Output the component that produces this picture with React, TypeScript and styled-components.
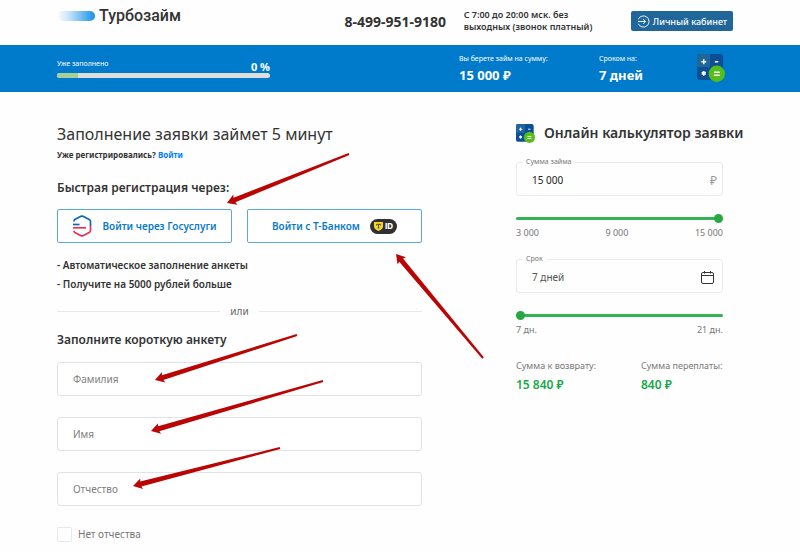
import React, { useState } from "react";
import styled, { createGlobalStyle } from "styled-components";

const GlobalStyle = createGlobalStyle`
  *, *::before, *::after { box-sizing: border-box; }
  body {
    margin: 0;
    background: #fefefe;
    color: #333;
    font-family: "Noto Sans", "Open Sans", sans-serif;
    font-size: 10px;
  }
  button, input { font-family: inherit; }
`;

const Page = styled.div`
  position: relative;
`;

const Header = styled.header`
  display: grid;
  grid-template-columns: 287fr 119fr 167fr auto;
  padding: 0 67px 0 57px;
  height: 45px;
`;

const Logo = styled.a`
  display: flex;
  gap: 4px;
  padding-top: 4px;
  align-self: start;
  align-items: center;
  color: #333;
  font-family: Roboto, sans-serif;
  font-size: 16px;
  font-weight: 500;
  line-height: 24px;
  text-decoration: none;
`;

const LogoMark = styled.span`
  width: 38px;
  height: 10px;
  border-radius: 5px;
  background: linear-gradient(90deg, #fefefe, #bfe0fa 35%, #1490ea);
`;

const Phone = styled.a`
  padding-top: 12px;
  color: #333;
  font-size: 14px;
  font-weight: 700;
  line-height: 20px;
  text-decoration: none;
  white-space: nowrap;
`;

const Schedule = styled.p`
  margin: 0;
  padding-top: 9px;
  font-size: 9px;
  font-weight: 600;
  line-height: 12px;
  white-space: nowrap;
`;

const AccountButton = styled.button`
  display: flex;
  align-items: center;
  justify-content: center;
  gap: 3px;
  width: 102px;
  height: 20px;
  margin-top: 11px;
  padding: 0;
  border: 0;
  border-radius: 2px;
  background: #216698;
  color: #fff;
  font-size: 9px;
  font-weight: 500;
  white-space: nowrap;
`;

const Summary = styled.section`
  display: grid;
  grid-template-columns: 402fr 140fr 98fr auto;
  padding: 0 75px 0 57px;
  height: 47px;
  background: #007acb;
  color: #fff;
`;

const Progress = styled.div`
  width: 53%;
  padding-top: 12px;
`;

const ProgressText = styled.div`
  display: flex;
  justify-content: space-between;
  height: 16px;
  font-size: 7px;
  line-height: 14px;
`;

const Percent = styled.strong`
  font-size: 11px;
  line-height: 19px;
`;

const ProgressTrack = styled.div`
  height: 5px;
  border-radius: 3px;
  background: #dedede;
  overflow: hidden;
`;

const ProgressFill = styled.div`
  width: 10%;
  height: 100%;
  background: #a8cf96;
`;

const Fact = styled.div`
  padding-top: 7px;
  font-size: 7px;
  line-height: 13px;
  white-space: nowrap;
`;

const FactValue = styled.strong`
  display: block;
  font-size: 13px;
  line-height: 20px;
`;

const SummaryIcon = styled.div`
  padding-top: 9px;
`;

const Main = styled.main`
  display: grid;
  grid-template-columns: 365fr 229fr;
  gap: 94px;
  padding: 30px 55px 0 57px;
`;

const Title = styled.h1`
  margin: 0;
  font-size: 16px;
  font-weight: 400;
  line-height: 24px;
  white-space: nowrap;
`;

const Registered = styled.p`
  margin: 2px 0 17px;
  font-size: 8px;
  font-weight: 700;
  line-height: 14px;
`;

const LoginLink = styled.a`
  color: #007bff;
  text-decoration: none;
`;

const Heading = styled.h2`
  margin: 0;
  font-size: 12px;
  font-weight: 600;
  line-height: 18px;
`;

const Providers = styled.div`
  display: grid;
  grid-template-columns: 1fr 1fr;
  gap: 15px;
  margin: 12px 0;
`;

const ProviderButton = styled.button`
  display: flex;
  align-items: center;
  justify-content: center;
  gap: 10px;
  height: 34px;
  padding: 0;
  border: 1px solid #5aa9de;
  border-radius: 2px;
  background: #fff;
  color: #0a7ac8;
  font-size: 10px;
  font-weight: 600;
  white-space: nowrap;
`;

const Benefits = styled.ul`
  margin: 0;
  padding: 1px 0 0;
  list-style: none;
  font-size: 10px;
  font-weight: 600;
  line-height: 19px;
`;

const Divider = styled.div`
  display: flex;
  align-items: center;
  gap: 10px;
  margin: 9px 0 12px;
  color: #666;
  line-height: 16px;

  &::before, &::after {
    content: "";
    flex: 1;
    height: 1px;
    background: #e6e8ea;
  }
`;

const Fields = styled.div`
  display: grid;
  gap: 21px;
  margin: 13px 0 20px;
`;

const TextField = styled.input`
  width: 100%;
  height: 34px;
  padding: 0 15px;
  border: 1px solid #dfe2e6;
  border-radius: 3px;
  background: #fff;
  color: #333;
  font-size: 10px;

  &::placeholder { color: #808080; opacity: 1; }
`;

const CheckLabel = styled.label`
  display: flex;
  align-items: center;
  gap: 6px;
  color: #777;
  line-height: 16px;
`;

const Checkbox = styled.input`
  appearance: none;
  width: 15px;
  height: 15px;
  margin: 0;
  border: 1px solid #e6e8ea;
  border-radius: 2px;
  background: #fff;

  &:checked { background: #007acb; }
`;

const CalcTitle = styled.h2`
  display: flex;
  align-items: center;
  gap: 9px;
  margin: 0;
  font-size: 14px;
  font-weight: 600;
  line-height: 22px;
  white-space: nowrap;
`;

const CalcBody = styled.div`
  padding: 12px 22px 0 0;
`;

const Outline = styled.fieldset`
  display: flex;
  align-items: center;
  height: 40px;
  margin: 0;
  padding: 0 5px 3px;
  min-width: 0;
  border: 1px solid #ebebeb;
  border-radius: 3px;
`;

const Legend = styled.legend`
  padding: 0 4px;
  color: #777;
  font-size: 7px;
  line-height: 12px;
`;

const OutlineInput = styled.input<{ $muted?: boolean }>`
  flex: 1;
  min-width: 0;
  padding: 0 10px;
  border: 0;
  outline: 0;
  background: transparent;
  color: ${(p) => (p.$muted ? "#555" : "#222")};
  font-size: 10px;
`;

const Currency = styled.span`
  color: #999;
  font-size: 12px;
`;

const OutlineIcon = styled.span`
  display: flex;
  padding-right: 3px;
`;

const Slider = styled.input`
  appearance: none;
  display: block;
  width: 100%;
  height: 10px;
  margin: 17px 0 2px;
  background: transparent;

  &::-webkit-slider-runnable-track {
    height: 3px;
    border-radius: 2px;
    background: #34b255;
  }

  &::-webkit-slider-thumb {
    appearance: none;
    width: 9px;
    height: 9px;
    margin-top: -3px;
    border-radius: 50%;
    background: #28a745;
  }
`;

const Scale = styled.div`
  display: flex;
  justify-content: space-between;
  margin-bottom: 13px;
  color: #777;
  font-size: 9px;
  line-height: 15px;
`;

const Results = styled.dl`
  display: grid;
  grid-template-columns: 125fr 82fr;
  margin: 20px 0 0;
  white-space: nowrap;
`;

const ResultLabel = styled.dt`
  color: #777;
  font-size: 9px;
  line-height: 17px;
`;

const ResultValue = styled.dd`
  margin: 0;
  color: #17a84b;
  font-size: 12px;
  font-weight: 600;
  line-height: 22px;
`;

const ArrowLayer = styled.svg`
  position: absolute;
  top: 0;
  left: 0;
  pointer-events: none;
`;

const CalculatorIcon = ({ size }: { size: number }) => (
  <svg width={size} height={size} viewBox="0 0 29 29" aria-hidden="true">
    <rect width="27" height="27" rx="3" fill="#0c4f94" />
    <path d="M3 0h10.5v13.5H0V3a3 3 0 0 1 3-3Z" fill="#216698" />
    <path d="M4.500 8h5M7 5.500v5M18.500 8h3.500M7 17.500v5M4.900 18.800l4.200 2.400M9.100 18.800l-4.200 2.400" stroke="#fff" strokeWidth="1.500" />
    <circle cx="20.500" cy="20.500" r="8.500" fill="#55be18" />
    <path d="M17.500 19h6M17.500 22h6" stroke="#fff" strokeWidth="1.500" />
  </svg>
);

const EnterIcon = () => (
  <svg width="13" height="13" viewBox="0 0 13 13" fill="none" stroke="#e5f0f7" aria-hidden="true">
    <path d="M1.300 4.300a5.600 5.600 0 1 1 0 4.400M1 6.500h7.500M6 4l2.500 2.500L6 9" />
  </svg>
);

const GosuslugiIcon = () => (
  <svg width="20" height="22" viewBox="0 0 20 22" fill="none" strokeWidth="1.700" aria-hidden="true">
    <path d="M2 6.500V5.800Q2 5 2.800 4.500L9 1.300Q10 .8 11 1.300L17.200 4.500Q18.500 5.200 18.500 6.500V11" stroke="#0967b2" />
    <path d="M18.500 11v4.500q0 1.300-1.300 2L11 20.700q-1 .5-2 0L2.800 17.500Q2 17 2 15.800" stroke="#ec2f56" />
    <path d="M1 9.500h6.500" stroke="#0967b2" />
    <path d="M1 12.800h13" stroke="#ec2f56" />
  </svg>
);

const IdBadge = styled.span`
  display: flex;
  align-items: center;
  justify-content: center;
  gap: 2px;
  width: 27px;
  height: 15px;
  border-radius: 8px;
  background: #303033;
  color: #fff;
  font-family: Inter, sans-serif;
  font-size: 8px;
  font-weight: 800;
`;

const ShieldIcon = () => (
  <svg width="9" height="9" viewBox="0 0 9 9" aria-hidden="true">
    <path d="M0 0h9v4.500Q9 7 4.500 9Q0 7 0 4.500Z" fill="#f8d52b" />
    <path d="M2.500 2.300h4v1.200M2.500 2.300v1.200M4.500 2.300v3.700M3.700 6h1.600" stroke="#303033" strokeWidth=".8" fill="none" />
  </svg>
);

const CalendarIcon = () => (
  <svg width="13" height="13" viewBox="0 0 13 13" fill="none" stroke="#333" aria-hidden="true">
    <path d="M2 1.500h9q1.500 0 1.500 1.500v8q0 1.500-1.500 1.500H2Q.5 12.500.5 11V3Q.5 1.500 2 1.500ZM.5 4.500h12M3.500 0v2.500M9.500 0v2.500" />
  </svg>
);

type Point = [number, number];

const arrows: { tail: Point; tip: Point }[] = [
  { tail: [349, 154], tip: [227, 203] },
  { tail: [483, 358], tip: [396, 254] },
  { tail: [297, 335], tip: [155, 380] },
  { tail: [323, 381], tip: [151, 431] },
  { tail: [280, 448], tip: [133, 486] },
];

function arrowPoints(tail: Point, tip: Point) {
  const length = Math.hypot(tail[0] - tip[0], tail[1] - tip[1]);
  const ux = (tail[0] - tip[0]) / length;
  const uy = (tail[1] - tip[1]) / length;
  const at = (along: number, side: number) =>
    `${tip[0] + ux * along - uy * side},${tip[1] + uy * along + ux * side}`;
  return [
    at(0, 0), at(9, 5.5), at(8, 2.5), at(length, 1),
    at(length, -1), at(8, -2.5), at(9, -5.5),
  ].join(" ");
}

export default function App() {
  const [amount, setAmount] = useState(15000);
  const [days, setDays] = useState(7);
  const format = (n: number) => n.toLocaleString("ru-RU");
  const fee = Math.round(amount * days * 0.008);

  return (
    <>
      <GlobalStyle />
      <Page>
        <Header>
          <Logo href="#"><LogoMark />Турбозайм</Logo>
          <Phone href="tel:84999519180">8-499-951-9180</Phone>
          <Schedule>С 7:00 до 20:00 мск. без<br />выходных (звонок платный)</Schedule>
          <AccountButton type="button"><EnterIcon />Личный кабинет</AccountButton>
        </Header>
        <Summary>
          <Progress>
            <ProgressText>Уже заполнено<Percent>0 %</Percent></ProgressText>
            <ProgressTrack><ProgressFill /></ProgressTrack>
          </Progress>
          <Fact>Вы берете займ на сумму:<FactValue>{format(amount)} ₽</FactValue></Fact>
          <Fact>Сроком на:<FactValue>{days} дней</FactValue></Fact>
          <SummaryIcon><CalculatorIcon size={28} /></SummaryIcon>
        </Summary>
        <Main>
          <form>
            <Title>Заполнение заявки займет 5 минут</Title>
            <Registered>Уже регистрировались? <LoginLink href="#">Войти</LoginLink></Registered>
            <Heading>Быстрая регистрация через:</Heading>
            <Providers>
              <ProviderButton type="button"><GosuslugiIcon />Войти через Госуслуги</ProviderButton>
              <ProviderButton type="button">
                Войти с Т-Банком
                <IdBadge><ShieldIcon />ID</IdBadge>
              </ProviderButton>
            </Providers>
            <Benefits>
              <li>- Автоматическое заполнение анкеты</li>
              <li>- Получите на 5000 рублей больше</li>
            </Benefits>
            <Divider>или</Divider>
            <Heading>Заполните короткую анкету</Heading>
            <Fields>
              <TextField aria-label="Фамилия" placeholder="Фамилия" />
              <TextField aria-label="Имя" placeholder="Имя" />
              <TextField aria-label="Отчество" placeholder="Отчество" />
            </Fields>
            <CheckLabel><Checkbox type="checkbox" />Нет отчества</CheckLabel>
          </form>
          <aside>
            <CalcTitle><CalculatorIcon size={19} />Онлайн калькулятор заявки</CalcTitle>
            <CalcBody>
              <Outline>
                <Legend><label htmlFor="amount">Сумма займа</label></Legend>
                <OutlineInput id="amount" value={format(amount)} readOnly />
                <Currency>₽</Currency>
              </Outline>
              <Slider type="range" aria-label="Сумма займа" min={3000} max={15000} step={1000} value={amount}
                onChange={(e) => setAmount(Number(e.target.value))} />
              <Scale><span>3 000</span><span>9 000</span><span>15 000</span></Scale>
              <Outline>
                <Legend><label htmlFor="term">Срок</label></Legend>
                <OutlineInput id="term" $muted value={`${days} дней`} readOnly />
                <OutlineIcon><CalendarIcon /></OutlineIcon>
              </Outline>
              <Slider type="range" aria-label="Срок" min={7} max={21} value={days}
                onChange={(e) => setDays(Number(e.target.value))} />
              <Scale><span>7 дн.</span><span>21 дн.</span></Scale>
              <Results>
                <div><ResultLabel>Сумма к возврату:</ResultLabel><ResultValue>{format(amount + fee)} ₽</ResultValue></div>
                <div><ResultLabel>Сумма переплаты:</ResultLabel><ResultValue>{format(fee)} ₽</ResultValue></div>
              </Results>
            </CalcBody>
          </aside>
        </Main>
        <ArrowLayer width="500" height="500" viewBox="0 0 500 500" aria-hidden="true">
          {arrows.map(({ tail, tip }) => (
            <polygon key={tip.join()} points={arrowPoints(tail, tip)} fill="#b90504" />
          ))}
        </ArrowLayer>
      </Page>
    </>
  );
}
